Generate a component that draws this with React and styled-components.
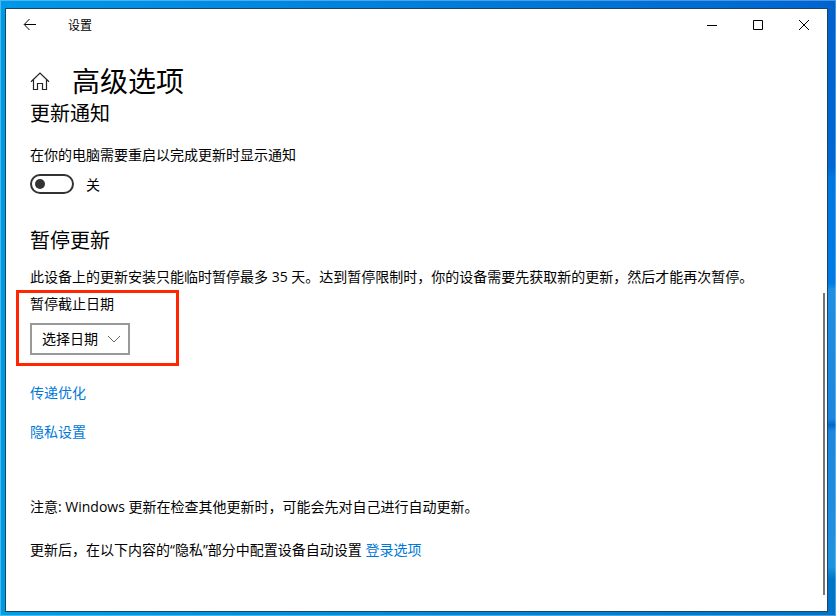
import React, { useState } from "react";
import styled, { createGlobalStyle } from "styled-components";

const GlobalStyle = createGlobalStyle`
  * {
    box-sizing: border-box;
  }
  body {
    margin: 0;
    color: #000;
    font-family: "Open Sans", "Noto Sans CJK SC", sans-serif;
    font-size: 14px;
    line-height: 20px;
  }
`;

const App = () => {
  const [notify, setNotify] = useState(false);

  return (
    <Desktop>
      <GlobalStyle />
      <Window>
        <TitleBar>
          <BackButton aria-label="返回">
            <svg width="14" height="14" viewBox="0 0 14 14">
              <path d="M13 6.5H1.5M6.5 1L1.2 6.5l5.3 5.5" />
            </svg>
          </BackButton>
          <AppName>设置</AppName>
          <CaptionButton aria-label="最小化">
            <svg width="10" height="10" viewBox="0 0 10 10">
              <path d="M0 5.5h10" />
            </svg>
          </CaptionButton>
          <CaptionButton aria-label="最大化">
            <svg width="10" height="10" viewBox="0 0 10 10">
              <path d="M.5.5h9v9h-9z" />
            </svg>
          </CaptionButton>
          <CaptionButton aria-label="关闭">
            <svg width="10" height="10" viewBox="0 0 10 10">
              <path d="M0 0l10 10M10 0L0 10" />
            </svg>
          </CaptionButton>
        </TitleBar>
        <Content>
          <Header>
            <HomeButton aria-label="主页">
              <svg width="20" height="20" viewBox="0 0 20 20">
                <path d="M1 10.7L10 2l9 8.7M3.5 8.8v9.7h4v-6h5v6h4V8.8" />
              </svg>
            </HomeButton>
            <PageTitle>高级选项</PageTitle>
          </Header>

          <SectionTitle>更新通知</SectionTitle>
          <Label htmlFor="notify">在你的电脑需要重启以完成更新时显示通知</Label>
          <ToggleRow>
            <Toggle
              id="notify"
              type="checkbox"
              checked={notify}
              onChange={(e) => setNotify(e.target.checked)}
            />
            <ToggleState>{notify ? "开" : "关"}</ToggleState>
          </ToggleRow>

          <SectionTitle>暂停更新</SectionTitle>
          <Text>
            此设备上的更新安装只能临时暂停最多 35
            天。达到暂停限制时，你的设备需要先获取新的更新，然后才能再次暂停。
          </Text>
          <Highlight>
            <label htmlFor="until">暂停截止日期</label>
            <SelectBox>
              <Select id="until">
                <option>选择日期</option>
              </Select>
              <svg width="14" height="8" viewBox="0 0 14 8">
                <path d="M1 1l6 6 6-6" />
              </svg>
            </SelectBox>
          </Highlight>

          <Links>
            <Link href="#">传递优化</Link>
            <Link href="#">隐私设置</Link>
          </Links>

          <Notes>
            <p>注意: Windows 更新在检查其他更新时，可能会先对自己进行自动更新。</p>
            <p>
              更新后，在以下内容的“隐私”部分中配置设备自动设置{" "}
              <Link href="#">登录选项</Link>
            </p>
          </Notes>
          <ScrollThumb />
        </Content>
      </Window>
    </Desktop>
  );
};

export default App;

const Desktop = styled.div`
  display: flex;
  min-height: 100vh;
  padding: 8px 8px 4px 5px;
  background:
    linear-gradient(
        #0062cc 0,
        #0068d4 27%,
        #0078e2 29%,
        #007ae6 46%,
        #1e8fe2 47%,
        #1c86de 68%,
        #0068cc 69%,
        #1c86de 70%,
        #1f93e0 92%,
        #0074c8 94%
      )
      right / 8px 100% no-repeat,
    linear-gradient(90deg, #00a0e6, #0074c8) bottom / 100% 4px no-repeat,
    linear-gradient(90deg, #0098e8, #0064d0) top / 100% 8px no-repeat,
    #009ae4;
  box-shadow: inset 0 0 0 1px rgba(255, 255, 255, 0.3);
`;

const Window = styled.div`
  flex: 1;
  display: flex;
  flex-direction: column;
  background: #fff;
  border: 1px solid #1c4564;
`;

const TitleBar = styled.div`
  display: flex;
  align-items: center;
  height: 32px;
`;

const CaptionButton = styled.button`
  display: flex;
  align-items: center;
  justify-content: center;
  width: 46px;
  height: 32px;
  padding: 0;
  border: none;
  background: none;
  svg {
    fill: none;
    stroke: #000;
  }
`;

const BackButton = styled(CaptionButton)`
  width: 48px;
`;

const AppName = styled.div`
  flex: 1;
  padding: 2px 0 0 14px;
  font-size: 12px;
`;

const Content = styled.div`
  position: relative;
  flex: 1;
  padding: 22px 24px;
`;

const Header = styled.div`
  display: flex;
  align-items: center;
  gap: 22px;
  margin-bottom: 1px;
`;

const HomeButton = styled(CaptionButton)`
  width: 20px;
  svg {
    stroke: #222;
    stroke-width: 1.2px;
  }
`;

const PageTitle = styled.h1`
  margin: 0;
  font-size: 28px;
  font-weight: 400;
  line-height: 36px;
`;

const SectionTitle = styled.h2`
  margin: 0;
  font-size: 20px;
  font-weight: 400;
  line-height: 28px;
`;

const Label = styled.label`
  display: block;
  margin-top: 17px;
`;

const ToggleRow = styled.div`
  display: flex;
  align-items: flex-start;
  gap: 12px;
  margin: 9px 0 32px;
`;

const Toggle = styled.input`
  appearance: none;
  display: flex;
  align-items: center;
  width: 44px;
  height: 20px;
  margin: 0;
  padding: 0 3px;
  border: 2px solid #333;
  border-radius: 10px;
  &::before {
    content: "";
    width: 10px;
    height: 10px;
    border-radius: 50%;
    background: #333;
  }
  &:checked {
    justify-content: flex-end;
  }
`;

const ToggleState = styled.span`
  padding-top: 1px;
`;

const Text = styled.p`
  margin: 12px 0 0;
`;

const Highlight = styled.div`
  width: 163px;
  margin: 3px 0 0 -14px;
  padding: 1px 11px 8px;
  border: 3px solid #ff2600;
  label {
    display: block;
  }
`;

const SelectBox = styled.div`
  position: relative;
  width: 100px;
  margin-top: 9px;
  svg {
    position: absolute;
    right: 9px;
    top: 12px;
    fill: none;
    stroke: #666;
    pointer-events: none;
  }
`;

const Select = styled.select`
  appearance: none;
  display: block;
  width: 100%;
  height: 32px;
  padding: 0 10px;
  border: 2px solid #999;
  border-radius: 0;
  background: #fff;
  color: #000;
  font: inherit;
`;

const Links = styled.div`
  display: flex;
  flex-direction: column;
  align-items: flex-start;
  gap: 19px;
  margin-top: 17px;
`;

const Link = styled.a`
  color: #0078d7;
  text-decoration: none;
`;

const Notes = styled.div`
  margin-top: 55px;
  p {
    margin: 0 0 23px;
  }
`;

const ScrollThumb = styled.div`
  position: absolute;
  right: 2px;
  bottom: 16px;
  width: 2px;
  height: 53%;
  background: #767676;
`;
